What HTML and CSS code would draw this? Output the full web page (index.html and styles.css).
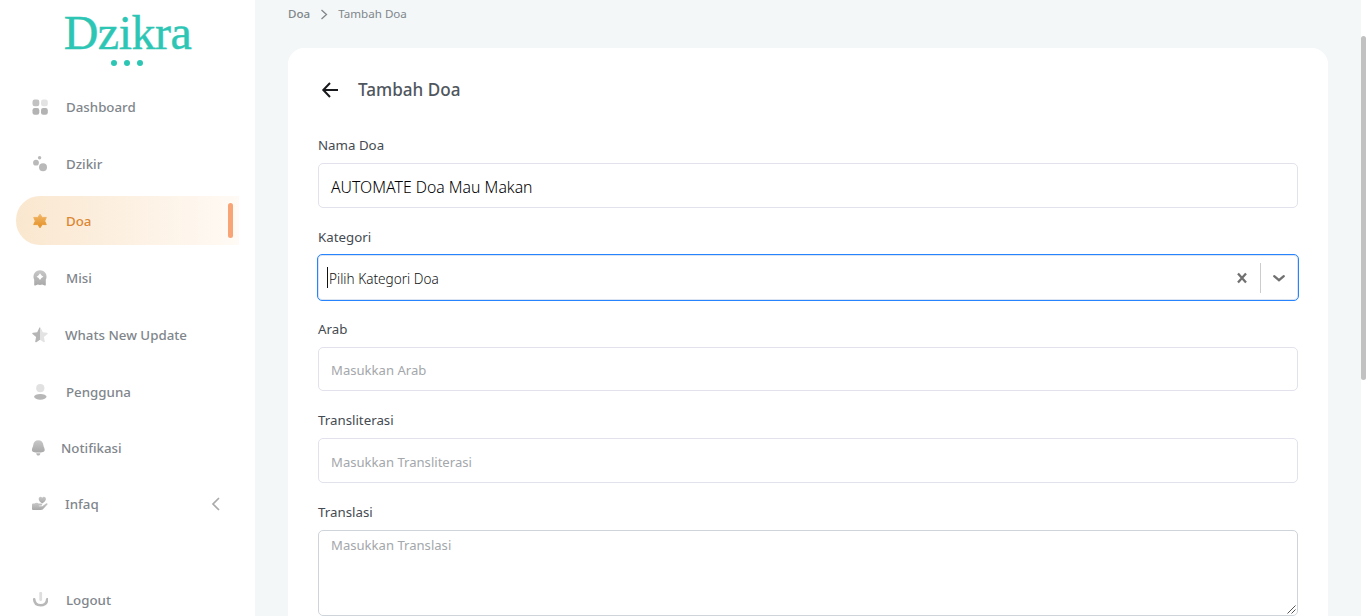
FILE: index.html
```html
<!DOCTYPE html>
<html lang="id">
<head>
<meta charset="utf-8">
<title>Tambah Doa</title>
<link rel="stylesheet" href="styles.css">
</head>
<body>
<div class="app">
  <aside class="sidebar">
    <div class="logo"><span class="logo-name">Dzikra</span><span class="logo-dots"><i></i><i></i><i></i></span></div>
    <svg class="defs" width="0" height="0"><defs>
      <linearGradient id="g" x1="0" y1="0" x2="0" y2="1"><stop offset="0" stop-color="#c8c8c8"/><stop offset="1" stop-color="#a8a8a8"/></linearGradient>
      <linearGradient id="o" x1="0" y1="0" x2="0" y2="1"><stop offset="0" stop-color="#f2b768"/><stop offset="1" stop-color="#e38f25"/></linearGradient>
    </defs></svg>
    <nav class="menu">
      <a class="item"><svg class="icon" viewBox="0 0 16 16" fill="#b3b3b3"><rect x=".5" y=".5" width="6.8" height="6.8" rx="2.2" fill="#c2c2c2"/><rect x="9" y=".5" width="6.8" height="6.8" rx="2.2" fill="#e3e3e3"/><rect x=".5" y="9" width="6.8" height="6.8" rx="2.2"/><rect x="9" y="9" width="6.8" height="6.8" rx="2.2"/></svg><span>Dashboard</span></a>
      <a class="item"><svg class="icon" viewBox="0 0 16 16" fill="#b9b9b9"><circle cx="7.6" cy="1.8" r="1.7"/><circle cx="4" cy="6.7" r="2.9"/><circle cx="11" cy="11.3" r="4"/></svg><span>Dzikir</span></a>
      <a class="item active"><svg class="icon" viewBox="0 0 16 16"><path d="M8 1.2L10.2 4.400h4.100L12.700 8l1.600 3.600h-4.100L8 14.800 5.800 11.600H1.700L3.300 8 1.700 4.400h4.100z" fill="url(#o)" stroke="url(#o)" stroke-width=".9" stroke-linejoin="round"/></svg><span>Doa</span><b class="marker"></b></a>
      <a class="item"><svg class="icon" viewBox="0 0 16 16"><path fill="url(#g)" fill-rule="evenodd" d="M8 .2a6.500 6.500 0 0 1 5.800 9.500v5c0 .8-.5 1.100-1.200.8L10.200 14.400l-2.200.6-2.200-.6-2.400 1.100c-.7.300-1.200 0-1.200-.8v-5A6.500 6.500 0 0 1 8 .2zM8 3.300L6.600 5.300 4.600 6.700 6.600 8.100 8 10.100l1.400-2 2-1.400-2-1.400z"/></svg><span>Misi</span></a>
      <a class="item near"><svg class="icon" viewBox="0 0 16 16"><path fill="#b5b5b5" d="M8 .3v12.500l-3.700 2.400c-.7.400-1.200 0-1.100-.7l.9-4.600L.5 6.900c-.5-.5-.3-1.100.5-1.200l4.200-.5L7.200 1c.2-.4.500-.7.8-.7z"/><path fill="#e3e3e3" d="M8 .3v12.500l3.700 2.400c.7.400 1.200 0 1.100-.7l-.9-4.600 3.600-3c.5-.5.3-1.100-.5-1.200l-4.200-.5L8.800 1C8.600.6 8.300.3 8 .3z"/></svg><span>Whats New Update</span></a>
      <a class="item"><svg class="icon" viewBox="0 0 16 16"><circle cx="8.3" cy="4.2" r="4.1" fill="#e1e1e1"/><ellipse cx="8.3" cy="12.8" rx="6.2" ry="2.9" fill="#b7b7b7"/></svg><span>Pengguna</span></a>
      <a class="item short bell"><svg class="icon" viewBox="0 0 16 16" fill="url(#g)"><path d="M8.300.3c2.900 0 4.700 1.800 5.100 5 .2 1.500 1.300 3 1.300 4.600 0 1.900-2.500 2.700-6.400 2.700s-6.400-.8-6.400-2.700c0-1.600 1.100-3.100 1.300-4.600.4-3.200 2.200-5 5.100-5z"/><path d="M6.200 13.200h4.200c-.2 1.500-1 2.300-2.100 2.300s-1.900-.8-2.100-2.300z" fill="#b5b5b5"/></svg><span>Notifikasi</span></a>
      <a class="item short near"><svg class="icon" viewBox="0 0 16 16" fill="url(#g)"><path d="M10.200 7.500C8.300 6 6.700 4.600 6.700 2.900c0-2.300 2.500-3 3.500-1.200 1-1.800 3.700-1.100 3.700 1.200 0 1.700-1.800 3.100-3.700 4.600z"/><path d="M0 8.800c0-.9.500-1.400 1.300-1.400h1.200c1.200-.8 3.100-.7 4.200 0h2.100c1.700 0 1.900 1.900.5 2.200l-2.500.2v.5h3.500l3.700-2.900c1-.7 2.100.3 1.400 1.200l-4.200 4.500c-.7.700-1.300.9-2.200.9H1.300C.4 14 0 13.500 0 12.700z"/></svg><span>Infaq</span><svg class="collapse" width="10" height="14" viewBox="0 0 10 14"><path d="M8 1L2 7l6 6" fill="none" stroke="#aaa" stroke-width="1.700"/></svg></a>
      <a class="item short logout"><svg class="icon" viewBox="0 0 16 16" fill="none" stroke-linecap="round"><path d="M8.700 1.200v6.500" stroke="#dedede" stroke-width="2.800"/><path d="M2.200 7.200c.2 4 3 6 6.500 6s6.300-2 6.500-6" stroke="#b8b8b8" stroke-width="2.600"/></svg><span>Logout</span></a>
    </nav>
  </aside>
  <main class="main">
    <div class="crumbs"><b class="c-root">Doa</b><svg width="8" height="12" viewBox="0 0 8 12"><path d="M1.500 2L6.500 6.500 1.500 11" fill="none" stroke="#80868b" stroke-width="1.300"/></svg><span>Tambah Doa</span></div>
    <section class="card">
      <header class="head"><svg width="18" height="18" viewBox="0 0 18 18"><path d="M17 9H2.500M9 2L2.300 9 9 16" fill="none" stroke="#17191c" stroke-width="2"/></svg><h1>Tambah Doa</h1></header>
      <div class="field"><label>Nama Doa</label><div class="box value"><span>AUTOMATE Doa Mau Makan</span></div></div>
      <div class="field"><label>Kategori</label>
        <div class="select"><i class="caret"></i><span class="placeholder">Pilih Kategori Doa</span>
          <svg class="clear" width="12" height="12" viewBox="0 0 12 12"><path d="M2 1.500l8 9M10 1.500l-8 9" stroke="#707070" stroke-width="2.300"/></svg><i class="divider"></i>
          <svg class="down" width="14" height="10" viewBox="0 0 14 10"><path d="M2.200 3.200L7 7.200l4.800-4" fill="none" stroke="#707070" stroke-width="2.300" stroke-linecap="round"/></svg></div></div>
      <div class="field f3"><label>Arab</label><div class="box low"><span>Masukkan Arab</span></div></div>
      <div class="field"><label>Transliterasi</label><div class="box tall"><span>Masukkan Transliterasi</span></div></div>
      <div class="field"><label>Translasi</label><div class="box area"><span>Masukkan Translasi</span><svg class="grip" width="9" height="9" viewBox="0 0 9 9"><path d="M.5 8.500l8-8M4.500 8.500l4-4" stroke="#555" fill="none"/></svg></div></div>
    </section>
  </main>
  <div class="scroll"><div class="thumb"></div></div>
</div>
</body>
</html>
```
FILE: styles.css
```css
* { box-sizing: border-box; }
body { margin: 0; overflow: hidden; background: #fff; font-family: "Noto Sans", "Open Sans", sans-serif; }
.app { display: flex; width: 1366px; height: 616px; overflow: hidden; }
.sidebar { width: 255px; flex: none; background: #fff; }
.defs { display: block; }
.logo { height: 82px; display: flex; flex-direction: column; align-items: center; padding-top: 6px; }
.logo-name { font: 48px/54px "Liberation Serif", serif; color: #2dc6b5; letter-spacing: -.5px; -webkit-text-stroke: .4px #2dc6b5; }
.logo-dots { display: flex; gap: 7px; margin-right: 1px; }
.logo-dots i { width: 6px; height: 6px; border-radius: 50%; background: #2dc6b5; }
.menu { padding-left: 16px; }
.item { display: flex; align-items: center; width: 223px; height: 49px; margin-bottom: 8px; padding-left: 16px; gap: 18px; font-size: 13.3px; font-weight: 500; color: #7f868c; white-space: nowrap; }
.icon { width: 16px; height: 16px; flex: none; }
.short { height: 48px; }
.near { gap: 17px; }
.bell { padding-left: 14px; gap: 15px; }
.logout { margin-top: 48px; }
.active { background: linear-gradient(90deg, #fae7cf, #fffaf5); border-radius: 24px 0 0 24px; color: #dc8732; }
.marker { width: 5px; height: 35px; border-radius: 3px; background: #f9a477; margin-left: auto; margin-right: 6px; }
.collapse { margin-left: auto; margin-right: 18px; }
.main { flex: 1; background: #f3f7f8; padding: 0 33px; }
.crumbs { display: flex; align-items: center; height: 28px; gap: 10px; font-size: 11.6px; line-height: 16px; padding-bottom: 1px; color: #80868b; }
.c-root { font-weight: 500; }
.card { margin-top: 20px; height: 600px; background: #fff; border-radius: 16px; padding: 0 30px; }
.head { height: 84px; display: flex; align-items: center; padding-left: 3px; gap: 19px; }
h1 { margin: 0; padding-bottom: 2px; font-size: 17.1px; font-weight: 500; color: #50565d; }
.field { display: flex; flex-direction: column; height: 92px; }
.field label { flex: none; height: 31px; line-height: 26px; font-size: 13.3px; font-weight: 400; color: #454b52; white-space: nowrap; }
.box { flex: none; display: flex; align-items: center; height: 45px; border: 1px solid #e2e2ec; border-radius: 5px; padding: 1px 12px 0; font-size: 13.1px; color: #a4a7ab; white-space: nowrap; }
.tall { padding-top: 3px; }
.value { font-size: 15.8px; font-weight: 300; color: #000; padding-top: 2px; }
.low { height: 44px; }
.f3 { height: 91px; }
.select { flex: none; display: flex; align-items: center; height: 47px; margin: -1px -1px 0; border: 1px solid #2684ff; box-shadow: inset 0 0 0 1px #dbe4f0; border-radius: 5px; padding: 0 12px 0 9px; font-size: 13.6px; font-weight: 300; color: #111; }
.placeholder { padding-top: 2px; }
.caret { width: 1px; height: 21px; background: #111; margin-right: 1px; }
.clear { margin-left: auto; }
.divider { width: 1px; height: 30px; background: #ccc; margin: 0 11px 0 12px; }
.area { height: 86px; border-color: #ced4da; position: relative; align-items: flex-start; padding-top: 5px; }
.grip { position: absolute; right: 1px; bottom: 1px; }
.scroll { width: 5px; padding-top: 36px; background: #fff; }
.thumb { height: 344px; background: #c1c1c1; border-radius: 3px; }
```
